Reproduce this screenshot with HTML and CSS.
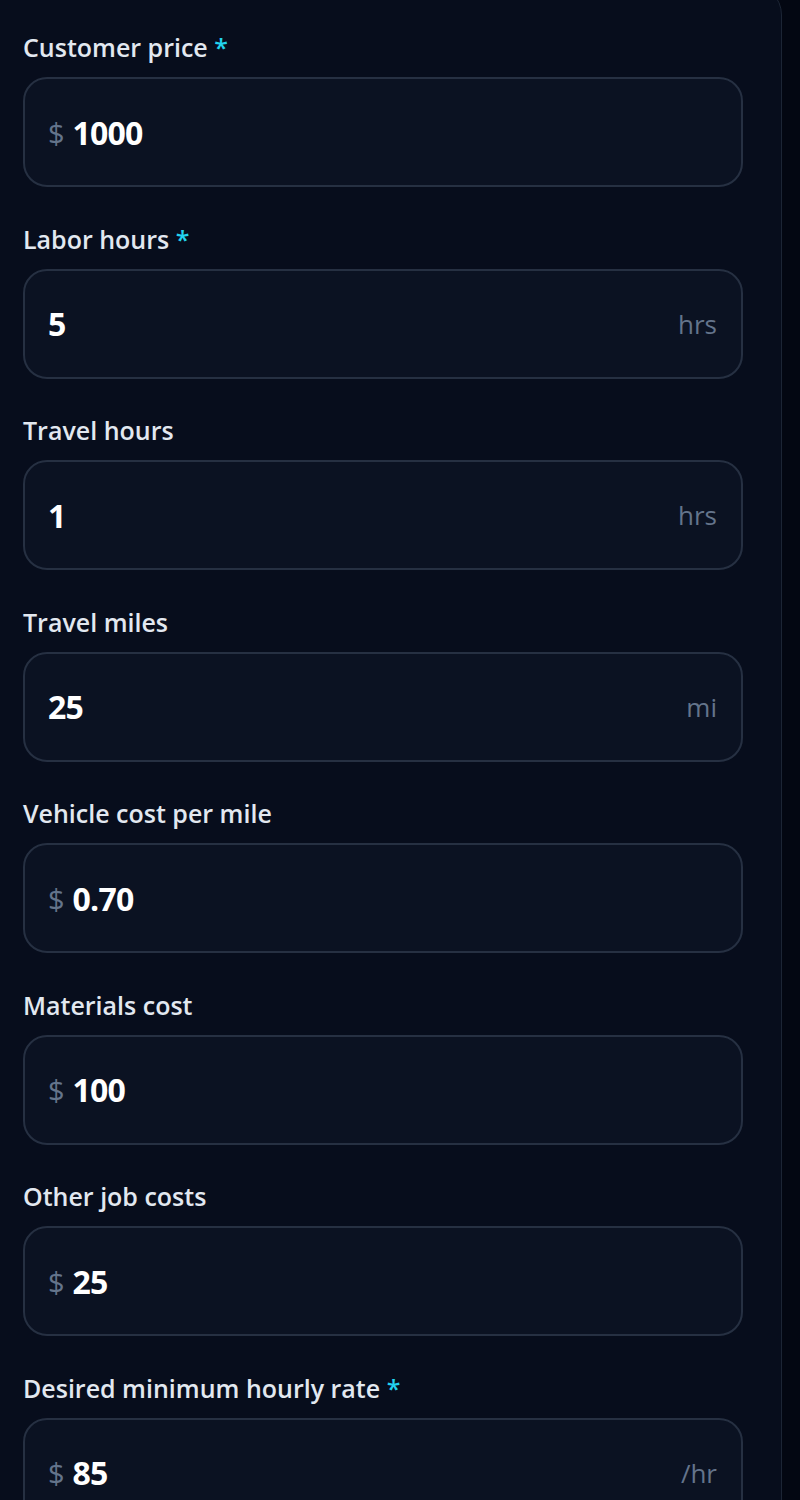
FILE: index.html
```html
<!DOCTYPE html>
<html lang="en">
<head>
<meta charset="utf-8">
<title>Job costs</title>
<link rel="stylesheet" href="styles.css">
</head>
<body>
<div class="card">
  <form class="form">
    <div class="field">
      <label class="label">Customer price <span class="req">*</span></label>
      <div class="box"><span class="prefix">$</span><input class="value" value="1000"></div>
    </div>
    <div class="field">
      <label class="label">Labor hours <span class="req">*</span></label>
      <div class="box"><input class="value" value="5"><span class="suffix">hrs</span></div>
    </div>
    <div class="field">
      <label class="label">Travel hours</label>
      <div class="box"><input class="value" value="1"><span class="suffix">hrs</span></div>
    </div>
    <div class="field">
      <label class="label">Travel miles</label>
      <div class="box"><input class="value" value="25"><span class="suffix">mi</span></div>
    </div>
    <div class="field">
      <label class="label">Vehicle cost per mile</label>
      <div class="box"><span class="prefix">$</span><input class="value" value="0.70"></div>
    </div>
    <div class="field">
      <label class="label">Materials cost</label>
      <div class="box"><span class="prefix">$</span><input class="value" value="100"></div>
    </div>
    <div class="field">
      <label class="label">Other job costs</label>
      <div class="box"><span class="prefix">$</span><input class="value" value="25"></div>
    </div>
    <div class="field">
      <label class="label">Desired minimum hourly rate <span class="req">*</span></label>
      <div class="box"><span class="prefix">$</span><input class="value" value="85"><span class="suffix">/hr</span></div>
    </div>
  </form>
</div>
</body>
</html>
```
FILE: styles.css
```css
* { box-sizing: border-box; }
html, body { margin: 0; padding: 0; background: #030712; }
body {
  font-family: "Open Sans", "Noto Sans", "Liberation Sans", sans-serif;
  color: #e2e8f0;
  overflow: hidden;
}
.card {
  margin: -17px 18px 0 -18px;
  background: #070d1c;
  border: 1px solid #1c2535;
  border-radius: 32px;
  padding: 45px 38px 60px 40px;
}
.form {
  display: flex;
  flex-direction: column;
  gap: 33.5px;
}
.field {
  display: flex;
  flex-direction: column;
  gap: 12px;
}
.label {
  font-size: 25px;
  line-height: 36px;
  font-weight: 600;
  color: #e2e8f0;
  letter-spacing: 0;
}
.req { color: #22d3ee; }
.box {
  height: 110px;
  display: flex;
  align-items: center;
  gap: 8px;
  padding: 0 24px 0 23px;
  background: #0b1222;
  border: 2px solid #263042;
  border-radius: 24px;
}
.prefix {
  font-size: 29px;
  color: #64748b;
}
.suffix {
  font-size: 26px;
  color: #64748b;
}
.value {
  flex: 1;
  min-width: 0;
  background: transparent;
  border: none;
  outline: none;
  padding: 0;
  font-family: inherit;
  font-size: 32px;
  font-weight: 700;
  color: #ffffff;
  letter-spacing: -0.8px;
}
```
